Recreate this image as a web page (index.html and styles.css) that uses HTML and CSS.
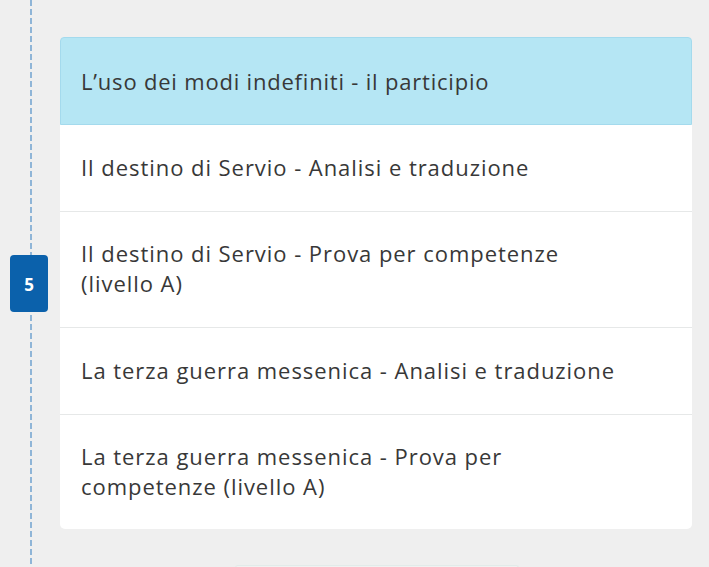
FILE: index.html
```html
<!DOCTYPE html>
<html lang="it">
<head>
<meta charset="utf-8">
<link rel="stylesheet" href="styles.css">
</head>
<body>
<div class="page">
  <div class="timeline">
    <div class="badge">5</div>
  </div>
  <div class="content">
    <ul class="card">
      <li class="row active">L’uso dei modi indefiniti - il participio</li>
      <li class="row">Il destino di Servio - Analisi e traduzione</li>
      <li class="row">Il destino di Servio - Prova per competenze<br>(livello A)</li>
      <li class="row">La terza guerra messenica - Analisi e traduzione</li>
      <li class="row">La terza guerra messenica - Prova per<br>competenze (livello A)</li>
    </ul>
    <div class="next"></div>
  </div>
</div>
</body>
</html>
```
FILE: styles.css
```css
html, body {
  margin: 0;
  padding: 0;
  background: #efefef;
  font-family: "Open Sans", "Liberation Sans", sans-serif;
  overflow: hidden;
}
.page {
  display: flex;
  height: 567px;
}
.timeline {
  width: 60px;
  flex: none;
  display: flex;
  align-items: flex-start;
  background-image: repeating-linear-gradient(to bottom, #8fb5d7 0 6px, transparent 6px 9px);
  background-size: 2px 100%;
  background-repeat: no-repeat;
  background-position: 30px 0;
  padding-top: 37px;
  box-sizing: border-box;
}
.badge {
  margin: 218px 0 0 10px;
  width: 38px;
  height: 57px;
  background: #0b61ab;
  border-radius: 4px;
  color: #fff;
  font-weight: 700;
  font-size: 17px;
  padding-top: 2px;
  box-sizing: border-box;
  display: flex;
  align-items: center;
  justify-content: center;
}
.content {
  width: 632px;
  padding-top: 37px;
  box-sizing: border-box;
}
.card {
  list-style: none;
  margin: 0;
  padding: 0;
  background: #fff;
  border-radius: 5px;
}
.row {
  padding: 26.5px 20px 29px 21px;
  font-size: 22px;
  line-height: 30px;
  color: #383838;
  border-bottom: 1px solid #e6e8e8;
  letter-spacing: 0.95px;
}
.row:last-child {
  border-bottom: none;
  padding-bottom: 27.5px;
}
.row.active {
  background: #b5e6f4;
  border: 1px solid #a4daed;
  border-radius: 4px 4px 0 0;
  padding: 28px 20px 28px 20px;
  letter-spacing: 0.8px;
}
.next {
  margin: 36px 0 0 175px;
  width: 282px;
  height: 2px;
  border: 1px solid #e2ebe9;
  border-bottom: none;
  border-radius: 20px 20px 0 0;
  background: #f1f1f1;
}
```
